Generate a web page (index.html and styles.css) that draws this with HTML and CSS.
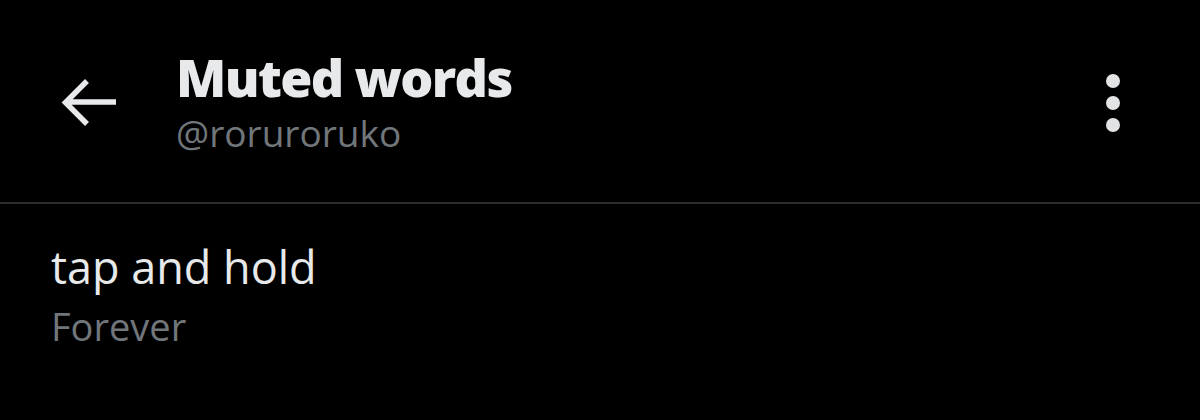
FILE: index.html
```html
<!DOCTYPE html>
<html>
<head>
<meta charset="utf-8">
<link rel="stylesheet" href="styles.css">
</head>
<body>
<div class="screen">
  <header class="topbar">
    <button class="back" aria-label="Back">
      <svg width="60" height="50" viewBox="0 0 60 50">
        <path d="M58 25H7M29 4L7.5 25.5L29 47" fill="none" stroke="#e7e9ea" stroke-width="5.5" stroke-linecap="butt" stroke-linejoin="miter"/>
      </svg>
    </button>
    <div class="titles">
      <div class="title">Muted words</div>
      <div class="handle">@roruroruko</div>
    </div>
    <button class="more" aria-label="More">
      <span class="dot"></span><span class="dot"></span><span class="dot"></span>
    </button>
  </header>
  <div class="row">
    <div class="word">tap and hold</div>
    <div class="duration">Forever</div>
  </div>
</div>
</body>
</html>
```
FILE: styles.css
```css
html, body {
  margin: 0;
  padding: 0;
  background: #000;
}
.screen {
  width: 1200px;
  height: 420px;
  background: #000;
  font-family: "Open Sans", "Noto Sans", sans-serif;
  color: #e7e9ea;
}
.topbar {
  display: flex;
  align-items: flex-start;
  height: 202px;
  border-bottom: 2px solid #2a2d30;
}
.back {
  background: none;
  border: 0;
  padding: 0;
  margin: 77px 0 0 58px;
  width: 60px;
  height: 50px;
  display: flex;
}
.titles {
  margin: 47px 0 0 58px;
  display: flex;
  flex-direction: column;
}
.title {
  font-size: 52px;
  font-weight: 800;
  line-height: 60px;
  letter-spacing: -1.6px;
}
.handle {
  margin-top: 3px;
  font-size: 37px;
  line-height: 46px;
  color: #71767b;
}
.more {
  margin: 74px 80px 0 auto;
  background: none;
  border: 0;
  padding: 0;
  display: flex;
  flex-direction: column;
  gap: 8px;
}
.dot {
  width: 14px;
  height: 14px;
  border-radius: 50%;
  background: #e1e3e4;
}
.row {
  padding: 36px 51px 0;
}
.word {
  font-size: 45px;
  line-height: 54px;
}
.duration {
  margin-top: 9px;
  font-size: 38px;
  line-height: 46px;
  color: #71767b;
}
```
